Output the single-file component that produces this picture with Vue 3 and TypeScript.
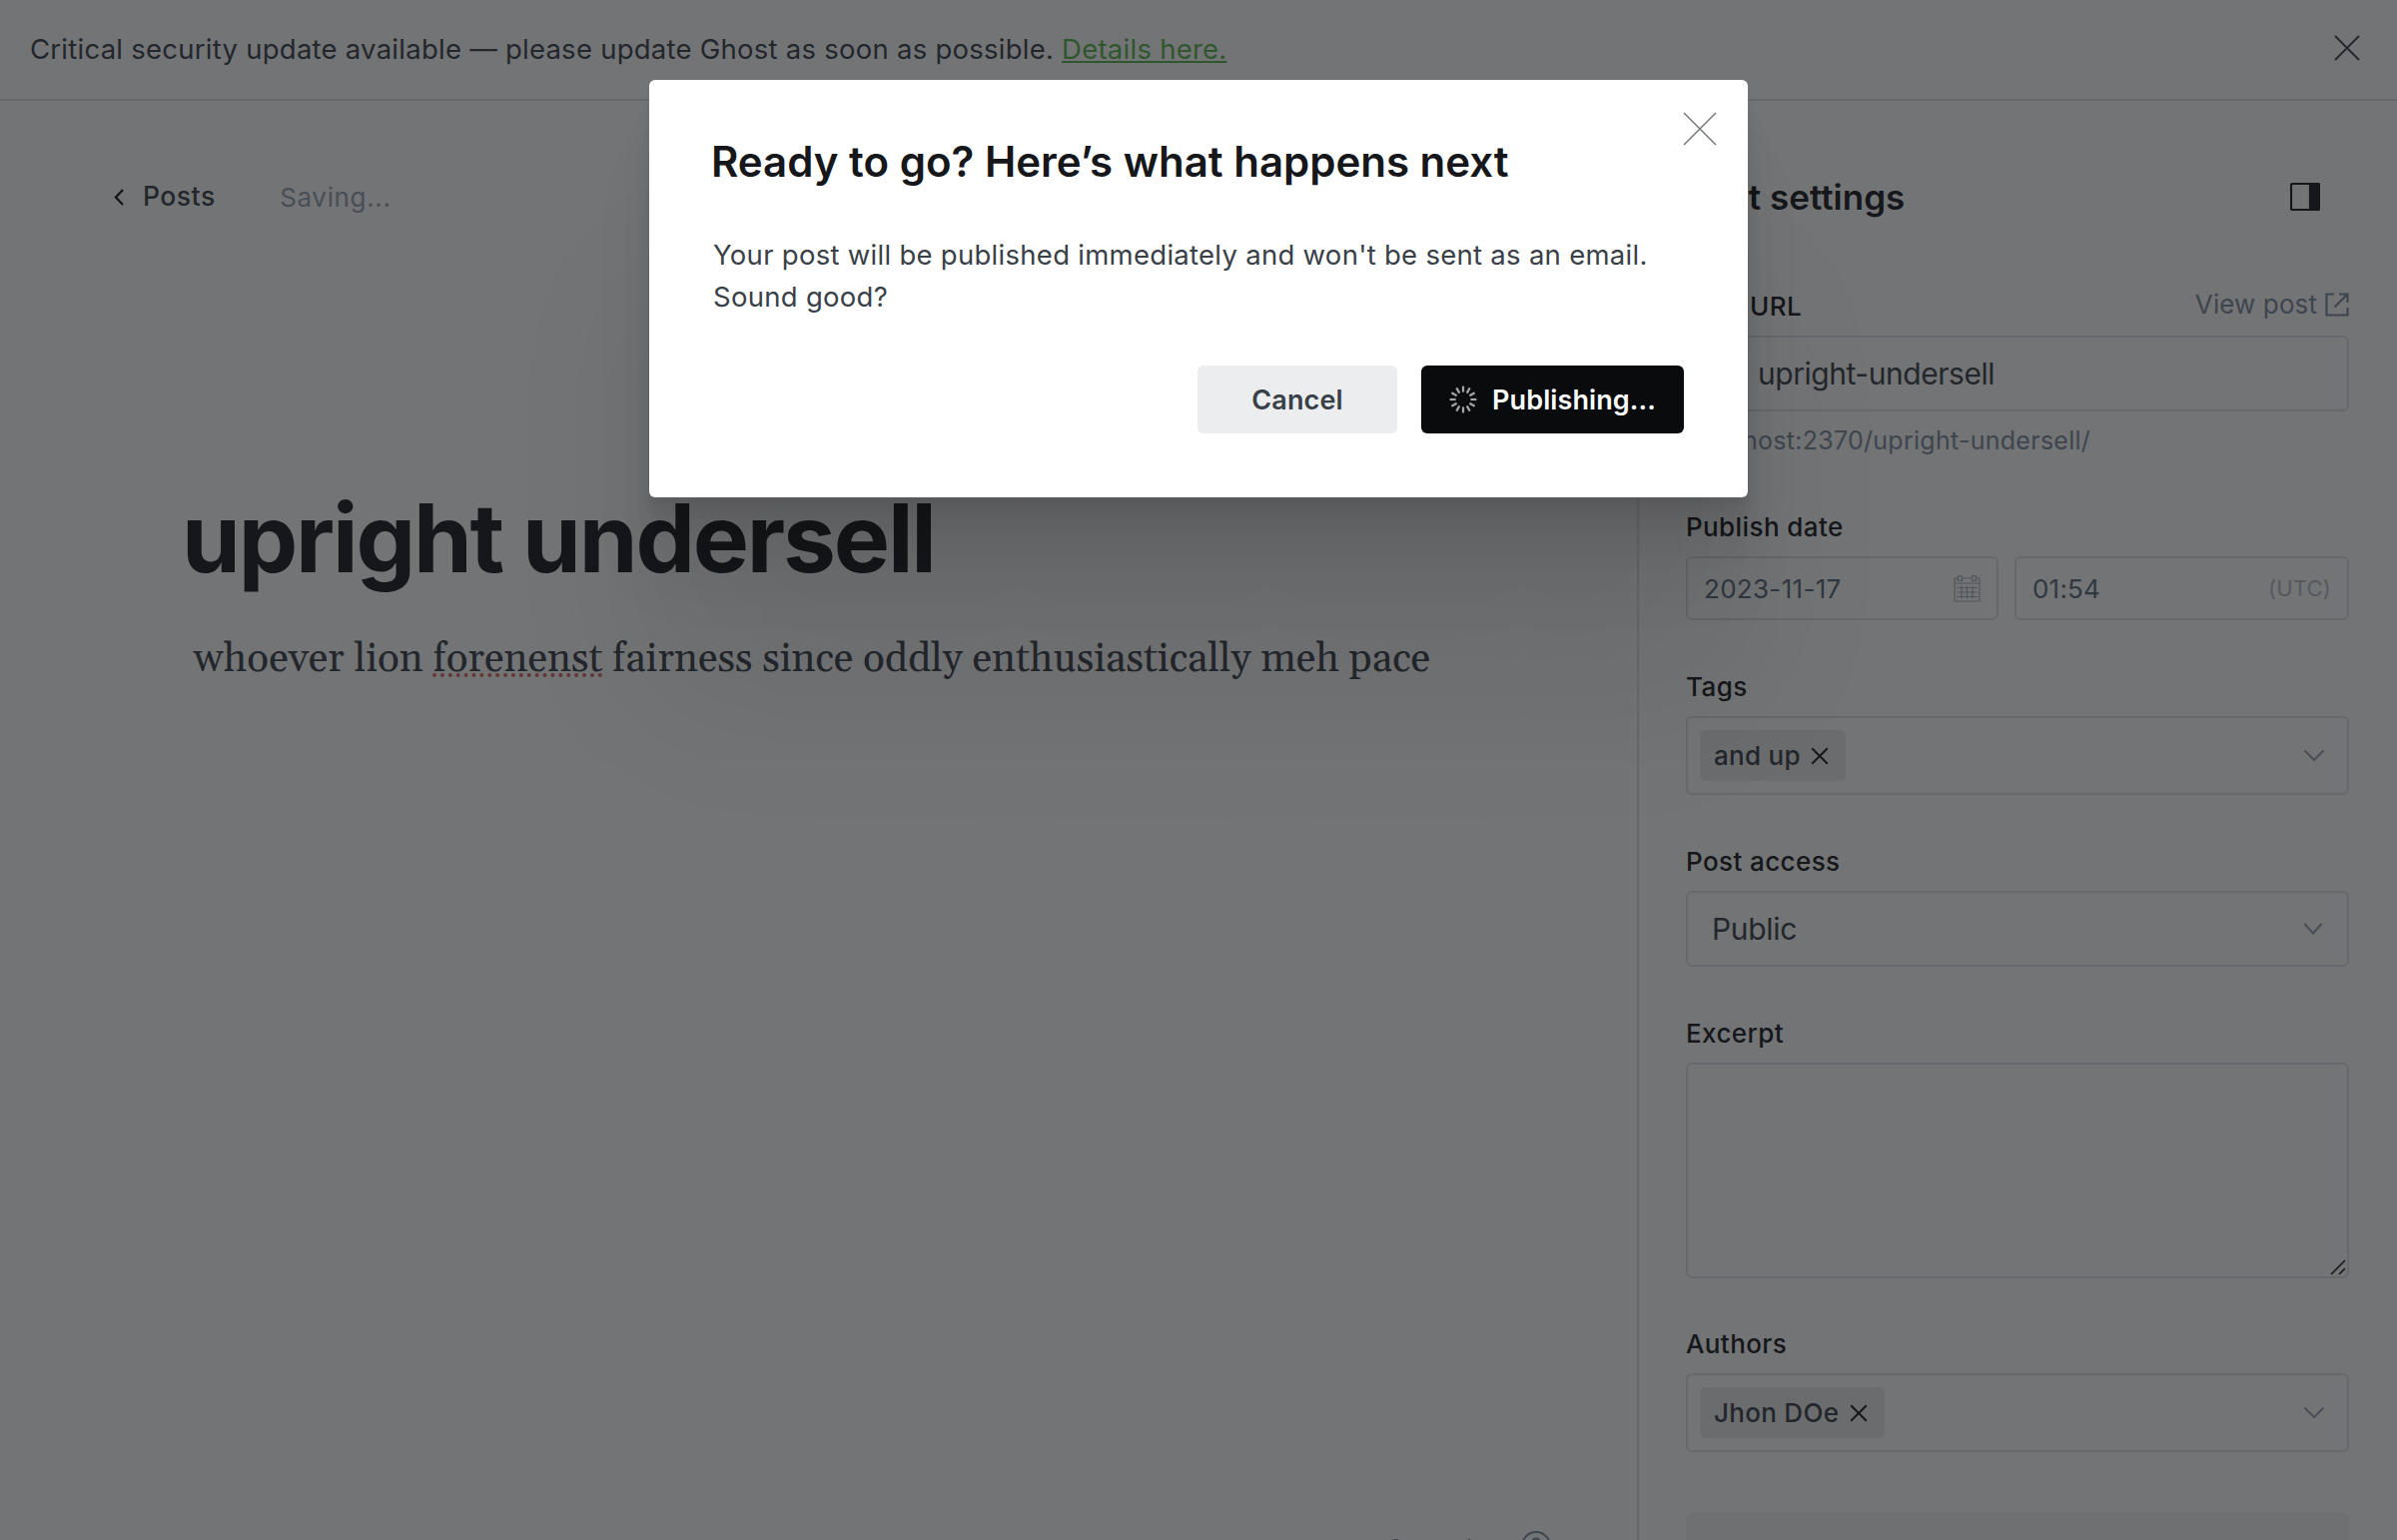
<script setup lang="ts">
import { ref } from 'vue'

const publishDate = ref('2023-11-17')
const publishTime = ref('01:54')
const tags = ref<string[]>(['and up'])
const authors = ref<string[]>(['Jhon DOe'])
const spokes = Array.from({ length: 12 }, (_, i) => i * 30)
</script>

<template>
  <div class="app">
    <header class="banner">
      <p>Critical security update available — please update Ghost as soon as possible. <a>Details here.</a></p>
      <svg class="banner-close" width="26" height="26" viewBox="0 0 26 26"><path d="M1 1l24 24M25 1L1 25" /></svg>
    </header>

    <div class="workspace">
      <main class="editor">
        <nav class="crumbs">
          <svg width="11" height="17" viewBox="0 0 11 17"><path d="M9 1L2 8.5L9 16" /></svg>
          <span class="posts">Posts</span>
          <span class="saving">Saving...</span>
        </nav>
        <article>
          <h1>upright undersell</h1>
          <p class="story">whoever lion <span class="typo">forenenst</span> fairness since oddly enthusiastically meh pace</p>
        </article>
        <div class="wordcount">
          <span>9 words</span>
          <svg width="30" height="30" viewBox="0 0 30 30"><circle cx="15" cy="15" r="14" /><path d="M11 11.5a4 4 0 1 1 5.500 3.800q-1.500.8-1.500 2.700v1M15 22v1.500" /></svg>
        </div>
      </main>

      <aside class="settings">
        <div class="settings-head">
          <h4>Post settings</h4>
          <svg width="30" height="28" viewBox="0 0 30 28"><rect x="1" y="1" width="28" height="26" rx="1.500" /><path d="M20 1h8a1 1 0 0 1 1 1v24a1 1 0 0 1-1 1h-8z" class="solid" /></svg>
        </div>

        <section class="field url">
          <div class="label-row">
            <label>Post URL</label>
            <a class="view">View post
              <svg width="24" height="24" viewBox="0 0 24 24"><path d="M9 1.500H1.500v21h21V15M14 1.500h8.500V10M22.500 1.500L9.500 14.500" /></svg>
            </a>
          </div>
          <div class="box slug">upright-undersell</div>
          <p class="hint">localhost:2370/upright-undersell/</p>
        </section>

        <section class="field date">
          <label>Publish date</label>
          <div class="pair">
            <div class="box day"><span>{{ publishDate }}</span>
              <svg width="27" height="27" viewBox="0 0 27 27"><path d="M4.500 3H1v23h25V3h-3.500M8.500 3h10M1 8h25M4.500 .8h4v4.500h-4zM18.500 .8h4v4.500h-4zM3 12.500h21M3 17h21M3 21.500h21M8 10.500v13M13.500 10.500v13M19 10.500v13" /></svg>
            </div>
            <div class="box time"><span>{{ publishTime }}</span><small>(UTC)</small></div>
          </div>
        </section>

        <section class="field tags">
          <label>Tags</label>
          <div class="box tokens">
            <span v-for="tag in tags" :key="tag" class="chip">{{ tag }}<svg width="18" height="18" viewBox="0 0 18 18"><path d="M1.200 1.200l15.600 15.600M16.800 1.200L1.200 16.800" /></svg></span>
            <svg class="caret" width="22" height="13" viewBox="0 0 22 13"><path d="M1.500 1.500L11 11L20.500 1.500" /></svg>
          </div>
        </section>

        <section class="field access">
          <label>Post access</label>
          <div class="box select">
            <span>Public</span>
            <svg class="caret" width="20" height="12" viewBox="0 0 20 12"><path d="M1.500 1L10 10.500L18.500 1" /></svg>
          </div>
        </section>

        <section class="field excerpt">
          <label>Excerpt</label>
          <div class="box area">
            <svg width="16" height="16" viewBox="0 0 16 16"><path d="M1 15L15 1M9 15L15 9" /></svg>
          </div>
        </section>

        <section class="field authors">
          <label>Authors</label>
          <div class="box tokens">
            <span v-for="author in authors" :key="author" class="chip">{{ author }}<svg width="18" height="18" viewBox="0 0 18 18"><path d="M1.200 1.200l15.600 15.600M16.800 1.200L1.200 16.800" /></svg></span>
            <svg class="caret" width="22" height="13" viewBox="0 0 22 13"><path d="M1.500 1.500L11 11L20.500 1.500" /></svg>
          </div>
        </section>

        <div class="more">Code injection</div>
      </aside>
    </div>

    <div class="overlay">
      <div class="modal">
        <svg class="modal-close" width="34" height="34" viewBox="0 0 34 34"><path d="M1 1l32 32M33 1L1 33" /></svg>
        <h2>Ready to go? Here’s what happens next</h2>
        <p>Your post will be published immediately and won't be sent as an email. Sound good?</p>
        <div class="actions">
          <button class="cancel">Cancel</button>
          <button class="publish">
            <svg width="28" height="28" viewBox="0 0 28 28"><path v-for="a in spokes" :key="a" d="M14 .6v6" :transform="`rotate(${a} 14 14)`" /></svg>
            <span>Publishing...</span>
          </button>
        </div>
      </div>
    </div>
  </div>
</template>

<style>
body { margin: 0; overflow: hidden; }
</style>

<style scoped>
* { box-sizing: border-box; }
.app {
  position: relative;
  width: 2400px;
  height: 1542px;
  overflow: hidden;
  background: #fff;
  color: #15171a;
  font-family: Inter, "Liberation Sans", sans-serif;
  display: flex;
  flex-direction: column;
}
p, h1, h2, h4 { margin: 0; }
svg { display: block; flex: none; fill: none; stroke: currentColor; }
.banner {
  height: 101px;
  flex: none;
  display: flex;
  align-items: center;
  justify-content: space-between;
  padding: 0 37px 1px 30px;
  border-bottom: 2px solid #dde1e5;
  font-size: 27.5px;
  letter-spacing: .25px;
  color: #394047;
}
.banner a { color: #56b548; text-decoration: underline; text-decoration-thickness: 2px; text-underline-offset: 2px; }
.banner-close { stroke-width: 1.8; margin-bottom: 2px; }
.workspace { flex: 1; display: flex; min-height: 0; }
.editor { width: 1639px; display: flex; flex-direction: column; padding-top: 76px; }
.crumbs { display: flex; align-items: center; height: 40px; padding-left: 114px; font-size: 26px; letter-spacing: .5px; }
.crumbs svg { stroke-width: 2.4; }
.posts { margin: 0 0 2px 18px; font-weight: 500; font-size: 26.500px; color: #394047; }
.saving { margin-left: 64.5px; letter-spacing: .65px; color: #95a1ad; }
article { flex: 1; padding: 269px 0 0 182px; }
h1 { font-size: 94.5px; line-height: 106px; font-weight: 700; letter-spacing: -2.2px; white-space: nowrap; }
.story { margin: 36px 0 0 12px; font-family: Gelasio, Georgia, "Liberation Serif", serif; font-size: 40.450px; line-height: 64px; color: #394047; white-space: nowrap; }
.typo { text-decoration: underline dotted #d9665c 4px; text-underline-offset: 2px; }
.wordcount { display: flex; justify-content: flex-end; gap: 35px; height: 10px; padding-right: 86px; font-size: 26px; line-height: 37px; color: #7c8b9a; }
.wordcount svg { stroke-width: 2; margin-top: 1px; }
.settings { width: 761px; border-left: 2px solid #e1e4e7; padding: 74px 48px 0 47px; }
.settings-head { display: flex; justify-content: space-between; align-items: center; height: 44px; padding-right: 29px; }
h4 { font-size: 35px; font-weight: 600; white-space: nowrap; }
.settings-head svg { stroke-width: 2.2; }
.solid { fill: currentColor; }
.field { display: flex; flex-direction: column; }
label { font-size: 26px; line-height: 32px; font-weight: 500; letter-spacing: .4px; }
.box { border: 2px solid #dde1e5; border-radius: 6px; display: flex; align-items: center; }
.url { margin-top: 72px; }
.label-row { display: flex; justify-content: space-between; }
.view { display: flex; gap: 8px; margin-top: -2px; font-size: 26px; line-height: 32px; letter-spacing: .1px; color: #7c8b9a; }
.view svg { stroke-width: 2.2; margin-top: 4px; }
.slug { height: 76px; margin-top: 13px; padding-left: 70px; font-size: 30px; letter-spacing: -.450px; color: #394047; }
.hint { margin-top: 14px; font-size: 25px; line-height: 30px; letter-spacing: .270px; color: #7c8b9a; }
.date { margin-top: 56px; }
.pair { display: flex; gap: 16px; margin-top: 13px; font-size: 26px; color: #576978; }
.day { width: 313px; height: 64px; justify-content: space-between; padding: 0 16px; letter-spacing: .3px; }
.day svg { stroke-width: 1.200; color: #a8b2bc; }
.time { flex: 1; height: 64px; justify-content: space-between; padding: 0 16px; letter-spacing: .2px; }
.time small { font-size: 22px; color: #b4bcc5; letter-spacing: .2px; }
.tags { margin-top: 51px; }
.tokens { height: 79px; margin-top: 13px; padding: 0 22px 0 12px; justify-content: space-between; }
.chip { display: flex; align-items: center; gap: 10.5px; height: 51px; padding: 0 17px 0 14px; border-radius: 6px; background: #e9eaeb; font-size: 26px; font-weight: 500; letter-spacing: .3px; color: #394047; }
.chip svg { stroke-width: 2; color: #15171a; }
.caret { color: #95a1ad; stroke-width: 2.200; }
.access { margin-top: 51px; }
.select { height: 76px; margin-top: 13px; padding: 0 24px; justify-content: space-between; font-size: 30px; letter-spacing: -.3px; color: #394047; }
.excerpt { margin-top: 51px; }
.area { height: 216px; margin-top: 13px; align-items: flex-end; justify-content: flex-end; padding: 1px; }
.area svg { stroke-width: 1.600; }
.authors { margin-top: 50px; }
.more { height: 80px; margin-top: 61px; padding: 23px 0 0 59px; border-radius: 6px; background: #f4f5f6; font-size: 28px; }
.overlay { position: absolute; inset: 0; background: rgba(21, 23, 26, .6); }
.modal {
  position: relative;
  width: 1100px;
  height: 418px;
  margin: 80px auto 0;
  padding: 56px 64px 64px;
  background: #fff;
  border-radius: 6px;
  box-shadow: 0 5.600px 4.400px rgba(0,0,0,.02), 0 13.400px 10.600px rgba(0,0,0,.028), 0 25px 20px rgba(0,0,0,.035), 0 44.600px 35.800px rgba(0,0,0,.042), 0 83.600px 66.800px rgba(0,0,0,.05), 0 200px 160px rgba(0,0,0,.07);
}
.modal-close { position: absolute; top: 32px; right: 31px; stroke-width: 1.500; color: #76797c; }
.modal h2 { font-size: 42px; line-height: 52px; font-weight: 600; white-space: nowrap; margin-left: -2px; }
.modal p { margin-top: 46px; font-size: 27.5px; line-height: 42px; letter-spacing: .28px; color: #394047; }
.actions { display: flex; justify-content: flex-end; gap: 24px; margin-top: 48px; }
button { height: 68px; border: 0; border-radius: 6px; padding: 0; font: 600 27px Inter, sans-serif; letter-spacing: .1px; display: flex; align-items: center; justify-content: center; }
.cancel { width: 200px; background: #ebedef; color: #394047; }
.publish { width: 263px; background: #0a0b0d; color: #fff; gap: 15px; }
.publish svg { stroke-width: 2.2; color: #a3a6a9; }
</style>
